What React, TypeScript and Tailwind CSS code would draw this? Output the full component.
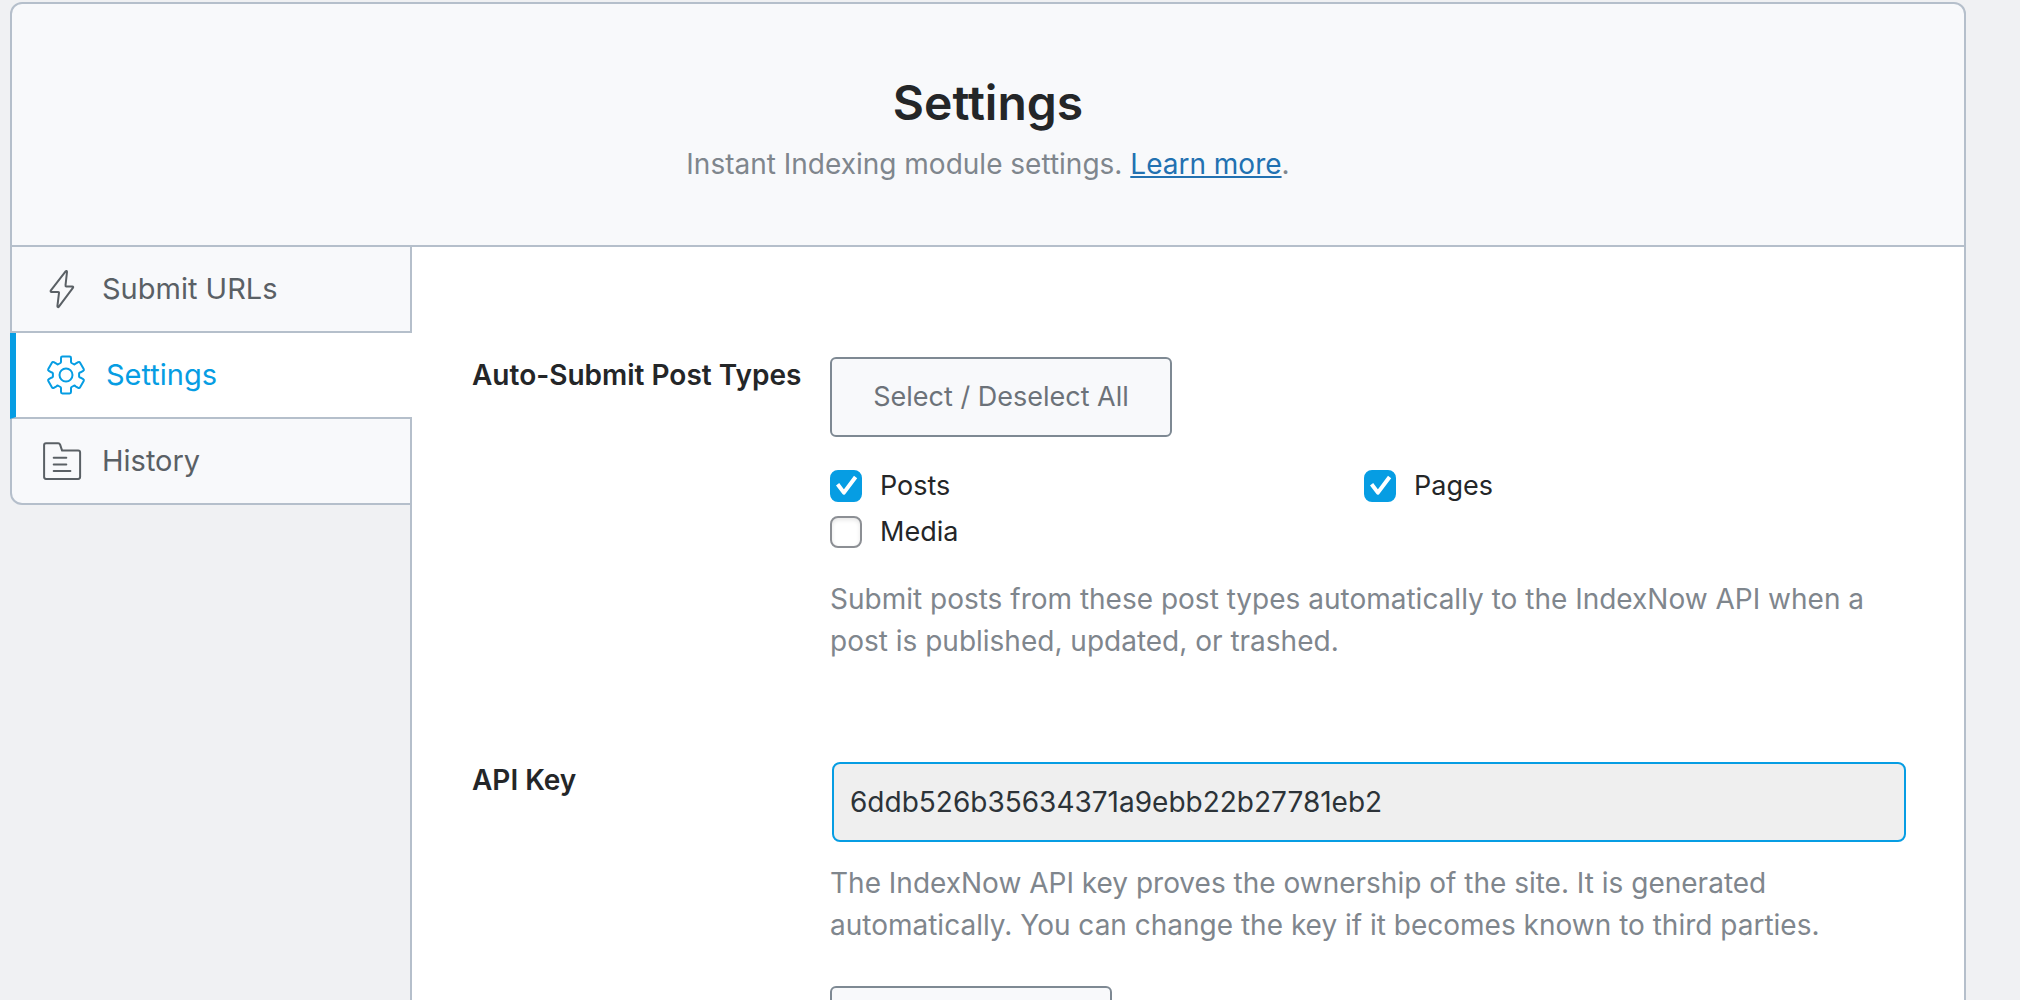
import { useState } from 'react';
import type { ReactNode } from 'react';
import clsx from 'clsx';

const BoltIcon = () => (
  <svg className="h-10 w-10 shrink-0" viewBox="0 0 40 40" fill="none" stroke="currentColor" strokeWidth="2" strokeLinecap="round" strokeLinejoin="round" aria-hidden="true">
    <path d="M23.6 2.4 8.9 21.4c-.6.9-.3 1.6.7 1.6h6.6c.6 0 .9.3.8.9l-1.6 13.2c-.1 1.2.9 1.4 1.5.5l14-18.7c.6-.8.3-1.5-.6-1.5h-6c-.6 0-.9-.4-.8-1l1.5-13.4c.1-1.2-.8-1.4-1.4-.6Z" />
  </svg>
);

const GearIcon = () => (
  <svg className="h-10 w-10 shrink-0" viewBox="-20 -20 40 40" fill="none" stroke="currentColor" strokeWidth="2" strokeLinejoin="round" aria-hidden="true">
    <path d="M-5-13.2V-17Q-5-18.4-3.6-18.4H3.6Q5-18.4 5-17v3.8Q5-12.4 5.6-12L8.2-10.5Q8.8-10.8 9.6-11.3L12.2-12.8Q13.4-13.5 14.1-12.3L17.7-6.1Q18.4-4.9 17.2-4.2L14.6-2.7Q13.2-2.2 13.1-1.5V1.5Q13.2 2.2 14.6 2.7L17.2 4.2Q18.4 4.9 17.7 6.1L14.1 12.3Q13.4 13.5 12.2 12.8L9.6 11.3Q8.8 10.8 8.2 10.5L5.6 12Q5 12.4 5 13.2V17Q5 18.4 3.6 18.4H-3.6Q-5 18.4-5 17V13.2Q-5 12.4-5.6 12L-8.2 10.5Q-8.8 10.8-9.6 11.3L-12.2 12.8Q-13.4 13.5-14.1 12.3L-17.7 6.1Q-18.4 4.9-17.2 4.2L-14.6 2.7Q-13.2 2.2-13.1 1.5V-1.5Q-13.2-2.2-14.6-2.7L-17.2-4.2Q-18.4-4.9-17.7-6.1L-14.1-12.3Q-13.4-13.5-12.2-12.8L-9.6-11.3Q-8.8-10.8-8.2-10.5L-5.6-12Q-5-12.4-5-13.2Z" />
    <circle r="6.5" />
  </svg>
);

const HistoryIcon = () => (
  <svg className="h-10 w-10 shrink-0" viewBox="0 0 40 40" fill="none" stroke="currentColor" strokeWidth="2" strokeLinecap="round" strokeLinejoin="round" aria-hidden="true">
    <path d="M4 2.2h12.2c1 0 1.6.6 1.9 1.4l2 6h16.100c1.2 0 1.900.7 1.900 1.900v24.600c0 1.100-.7 1.800-1.900 1.800H4c-1.200 0-1.900-.7-1.900-1.800V4.100C2.100 2.900 2.800 2.200 4 2.200Z" />
    <path d="M11.7 16.7h12.6M11.7 23.4h12.6M11.7 30.1h16.7" />
  </svg>
);

const tabs = [
  { id: 'submit', label: 'Submit URLs', icon: <BoltIcon /> },
  { id: 'settings', label: 'Settings', icon: <GearIcon /> },
  { id: 'history', label: 'History', icon: <HistoryIcon /> },
];

const postTypes = [
  { id: 'post', label: 'Posts' },
  { id: 'page', label: 'Pages' },
  { id: 'attachment', label: 'Media' },
];

function Checkbox({ id, label, checked, onChange }: { id: string; label: string; checked: boolean; onChange: () => void }) {
  return (
    <div className="flex h-[46px] items-center gap-[18px]">
      <span className="relative h-8 w-8 shrink-0">
        <input
          id={id}
          type="checkbox"
          checked={checked}
          onChange={onChange}
          className="block h-8 w-8 appearance-none rounded-lg border-2 border-[#8c8f94] bg-white shadow-[inset_0_2px_4px_rgba(0,0,0,0.1)] checked:border-[#069de3] checked:bg-[#069de3] checked:shadow-none"
        />
        {checked && (
          <svg className="pointer-events-none absolute inset-0 h-8 w-8" viewBox="0 0 32 32" fill="none" stroke="#fff" strokeWidth="4" strokeLinejoin="round" aria-hidden="true">
            <path d="M7.6 14.2 13.9 22.6 25.6 7" />
          </svg>
        )}
      </span>
      <label htmlFor={id} className="text-[27px] leading-[42px] text-[#242628]">{label}</label>
    </div>
  );
}

function Field({ title, htmlFor, children }: { title: string; htmlFor?: string; children: ReactNode }) {
  const titleClass = 'w-[358px] shrink-0 text-[28px] leading-9 font-semibold text-[#242628]';
  return (
    <div className="flex">
      {htmlFor ? <label htmlFor={htmlFor} className={titleClass}>{title}</label> : <h2 className={titleClass}>{title}</h2>}
      <div className="min-w-0 flex-1">{children}</div>
    </div>
  );
}

const buttonClass = 'block h-20 rounded-md border-2 border-[#7e8993] bg-[#f8f9fb] text-[27px] text-[#6c7279]';
const descClass = 'text-[28px] leading-[42px] text-[#7f868d]';

export default function App() {
  const [activeTab, setActiveTab] = useState('settings');
  const [selected, setSelected] = useState<string[]>(['post', 'page']);

  const toggle = (id: string) => {
    setSelected((prev) => (prev.includes(id) ? prev.filter((p) => p !== id) : [...prev, id]));
  };

  const toggleAll = () => {
    setSelected((prev) => (prev.length === postTypes.length ? [] : postTypes.map((p) => p.id)));
  };

  return (
    <div className="flex h-screen flex-col overflow-hidden bg-[#f0f1f3] pt-0.5 pr-[54px] pl-2.5 font-[Inter,'Liberation_Sans',sans-serif]">
      {/* Header */}
      <header className="shrink-0 rounded-t-xl border-2 border-[#b5bfcb] bg-[#f8f9fb] pt-[69px] pb-[60px] text-center">
        <h1 className="text-5xl leading-[60px] font-semibold text-[#242628]">Settings</h1>
        <p className={clsx(descClass, 'pt-2.5')}>
          Instant Indexing module settings. <a href="#learn-more" className="text-[#2271b1] underline">Learn more</a>.
        </p>
      </header>

      <div className="flex flex-1">
        {/* Tabs */}
        <nav className="flex w-[402px] shrink-0 flex-col">
          {tabs.map((tab) => (
            <button
              key={tab.id}
              type="button"
              onClick={() => setActiveTab(tab.id)}
              className={clsx(
                'flex h-[86px] shrink-0 items-center gap-5 border-b-2 border-b-[#b5bfcb] pl-[30px] text-[29px] last-of-type:rounded-bl-xl',
                activeTab === tab.id
                  ? 'border-l-[6px] border-l-[#069de3] bg-white text-[#069de3]'
                  : 'border-x-2 border-x-[#b5bfcb] bg-[#f8f9fb] text-[#5a6065]'
              )}
            >
              {tab.icon}
              {tab.label}
            </button>
          ))}
          <div className="flex-1 border-r-2 border-[#b5bfcb]" />
        </nav>

        {/* Settings form */}
        <main className="min-w-0 flex-1 space-y-[100px] border-r-2 border-[#b5bfcb] bg-white pt-[110px] pr-14 pl-[60px]">
          <Field title="Auto-Submit Post Types">
            <button type="button" onClick={toggleAll} className={clsx(buttonClass, 'w-[342px]')}>
              Select / Deselect All
            </button>
            <div className="mt-[26px] grid grid-cols-2 pr-2.5">
              {postTypes.map((type) => (
                <Checkbox
                  key={type.id}
                  id={type.id}
                  label={type.label}
                  checked={selected.includes(type.id)}
                  onChange={() => toggle(type.id)}
                />
              ))}
            </div>
            <p className={clsx(descClass, 'mt-[23px]')}>
              Submit posts from these post types automatically to the IndexNow API when a post is published, updated, or trashed.
            </p>
          </Field>

          <Field title="API Key" htmlFor="api-key">
            <div className="px-0.5">
              <input
                id="api-key"
                type="text"
                readOnly
                value="6ddb526b35634371a9ebb22b27781eb2"
                className="block h-20 w-full rounded-lg border-2 border-[#069de3] bg-[#efefef] px-4 text-[28px] text-[#2c3338] outline-none"
              />
            </div>
            <p className={clsx(descClass, 'mt-5')}>
              The IndexNow API key proves the ownership of the site. It is generated automatically. You can change the key if it becomes known to third parties.
            </p>
            <button type="button" className={clsx(buttonClass, 'mt-10 w-[282px]')}>
              Change Key
            </button>
          </Field>
        </main>
      </div>
    </div>
  );
}
